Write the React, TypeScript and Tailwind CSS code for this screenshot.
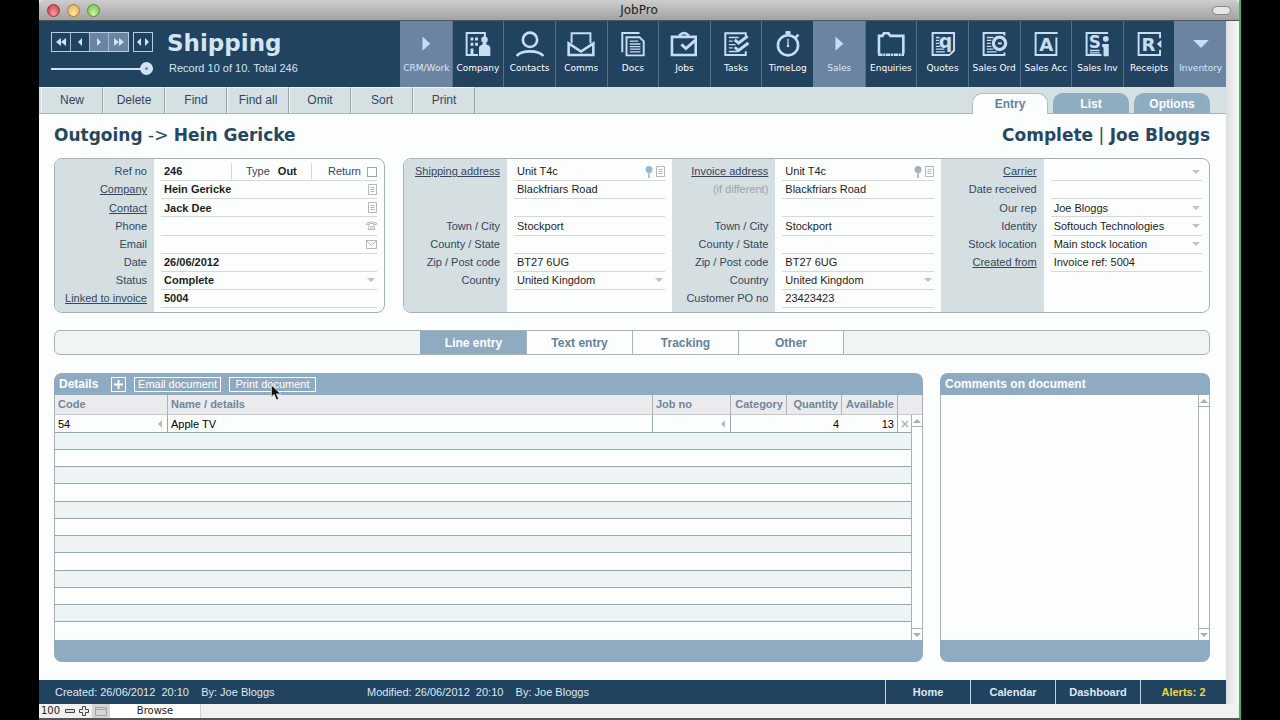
import { useId, type ReactNode } from 'react';
import clsx from 'clsx';

interface NavItem {
  label: string;
  icon: ReactNode;
  group?: boolean;
}

interface FieldData {
  label?: string;
  hint?: boolean;
  link?: boolean;
  value?: string;
  select?: boolean;
  icons?: ReactNode;
  blank?: boolean;
}

function NavIcon({ children }: { children: ReactNode }) {
  return (
    <svg
      viewBox="0 0 84 80"
      className="h-[26px] w-[28px]"
      fill="none"
      stroke="currentColor"
      strokeWidth="8"
      aria-hidden="true"
    >
      {children}
    </svg>
  );
}

const glyph = 'fill-current stroke-none font-[DejaVu_Sans,sans-serif] font-bold';

const arrowRight = (
  <NavIcon>
    <path d="M31 17L55 39L31 61Z" fill="currentColor" stroke="none" />
  </NavIcon>
);

const arrowDown = (
  <NavIcon>
    <path d="M18 28H66L42 52Z" fill="currentColor" stroke="none" />
  </NavIcon>
);

const navItems: NavItem[] = [
  { label: 'CRM/Work', icon: arrowRight, group: true },
  {
    label: 'Company',
    icon: (
      <NavIcon>
        <path d="M63 20V6H7V74H42" strokeWidth="6" />
        <path
          d="M19 20h9v9h-9zM33 20h9v9h-9zM19 36h9v9h-9zM33 36h9v9h-9zM19 54h9v18h-9z"
          fill="currentColor"
          stroke="none"
        />
        <circle cx="62" cy="27" r="10" fill="currentColor" stroke="none" />
        <path d="M45 77V52q0-8 10-10l2-6h10l2 6q11 2 11 12v23z" fill="currentColor" stroke="none" />
      </NavIcon>
    ),
  },
  {
    label: 'Contacts',
    icon: (
      <NavIcon>
        <circle cx="42" cy="27" r="22" />
        <path d="M1 77C16 58 68 58 83 77" />
      </NavIcon>
    ),
  },
  {
    label: 'Comms',
    icon: (
      <NavIcon>
        <path d="M13 38V7H71V38" strokeWidth="6" />
        <path d="M4 38V74H80V38L42 63Z" />
      </NavIcon>
    ),
  },
  {
    label: 'Docs',
    icon: (
      <NavIcon>
        <path d="M9 65V6H62" strokeWidth="6" />
        <path d="M22 75V19H62L75 32V75Z" strokeWidth="6" />
        <path d="M32 31H58M32 40H65M32 48H65M32 56H65M32 64H65" strokeWidth="4" />
      </NavIcon>
    ),
  },
  {
    label: 'Jobs',
    icon: (
      <NavIcon>
        <path d="M5 18H78V74H5Z" />
        <path d="M27 15Q42 -3 57 15" />
        <path d="M34 41L48 54L76 29" strokeWidth="9" />
      </NavIcon>
    ),
  },
  {
    label: 'Tasks',
    icon: (
      <NavIcon>
        <path d="M72 15V7H9V74H72V62" strokeWidth="6" />
        <path d="M20 20H50M20 31H32M20 42H40M20 52H32M20 63H48" strokeWidth="4" />
        <path d="M38 27L50 37L78 16M38 50L50 60L80 37" strokeWidth="9" />
      </NavIcon>
    ),
  },
  {
    label: 'TimeLog',
    icon: (
      <NavIcon>
        <circle cx="42" cy="44" r="31" />
        <path d="M42 0V13M34 5H50M64 22L74 11" />
        <path d="M42 24V48" strokeWidth="4" />
        <circle cx="42" cy="46" r="4" fill="currentColor" stroke="none" />
      </NavIcon>
    ),
  },
  { label: 'Sales', icon: arrowRight, group: true },
  {
    label: 'Enquiries',
    icon: (
      <NavIcon>
        <path d="M5 70V15H16L20 7H34L40 15H80V70" />
        <path d="M2 73H82" strokeDasharray="14 2 6 2" />
      </NavIcon>
    ),
  },
  {
    label: 'Quotes',
    icon: (
      <NavIcon>
        <path d="M64 74H10V6H76V60L64 72" strokeWidth="6" />
        <path d="M20 20H32M20 29H30M20 38H30M20 47H34M20 56H46M20 64H48" strokeWidth="4" />
        <text x="29" y="52" fontSize="58" className={glyph}>q</text>
      </NavIcon>
    ),
  },
  {
    label: 'Sales Ord',
    icon: (
      <NavIcon>
        <path d="M74 14V6H10V74H74V66" strokeWidth="6" />
        <path d="M20 20H40M20 29H34M20 38H32M20 47H34M20 56H40M20 64H50" strokeWidth="4" />
        <circle cx="59" cy="38" r="19" strokeWidth="10" />
        <path d="M54 38H66" strokeWidth="6" />
      </NavIcon>
    ),
  },
  {
    label: 'Sales Acc',
    icon: (
      <NavIcon>
        <path d="M78 6H10V74H74V20" strokeWidth="6" />
        <text x="21" y="60" fontSize="56" className={glyph}>A</text>
      </NavIcon>
    ),
  },
  {
    label: 'Sales Inv',
    icon: (
      <NavIcon>
        <path d="M76 6H10V74H56" strokeWidth="6" />
        <text x="17" y="53" fontSize="52" className={glyph}>S</text>
        <path d="M20 60H50M20 67H50" strokeWidth="4" />
        <circle cx="69" cy="24" r="9" fill="currentColor" stroke="none" />
        <path d="M58 40H78V78H62V50H58Z" fill="currentColor" stroke="none" />
      </NavIcon>
    ),
  },
  {
    label: 'Receipts',
    icon: (
      <NavIcon>
        <path d="M76 22V6H10V74H76V58" strokeWidth="6" />
        <text x="19" y="60" fontSize="56" className={glyph}>R</text>
        <path d="M80 28V52L66 40Z" fill="currentColor" stroke="none" />
      </NavIcon>
    ),
  },
  { label: 'Inventory', icon: arrowDown, group: true },
];

const actions = ['New', 'Delete', 'Find', 'Find all', 'Omit', 'Sort', 'Print'];
const views = ['Entry', 'List', 'Options'];
const sections = ['Line entry', 'Text entry', 'Tracking', 'Other'];
const places = ['Home', 'Calendar', 'Dashboard'];

const cardIcon = (
  <svg viewBox="0 0 9 11" className="h-[11px] w-[9px]" fill="none" stroke="#b3b9be" aria-hidden="true">
    <path d="M.5 .5H8.5V10.5H.5Z" />
    <path d="M2.5 3.5H6.5M2.5 5.5H6.5M2.5 7.5H6.5" />
  </svg>
);

const phoneIcon = (
  <svg viewBox="0 0 11 9" className="h-[9px] w-[11px]" fill="none" stroke="#b9bec2" aria-hidden="true">
    <path d="M.5 3.5V2Q5.5 -.5 10.5 2V3.5H8V2.5H3V3.5Z" />
    <path d="M3.5 3.5L2 8.5H9L7.5 3.5M4.5 5.5H7M4 7H7.5" />
  </svg>
);

const mailIcon = (
  <svg viewBox="0 0 11 9" className="h-[9px] w-[11px]" fill="none" stroke="#b3b9be" aria-hidden="true">
    <path d="M.5 .5H10.5V8.5H.5ZM.5 .5L5.5 5.5L10.5 .5" />
  </svg>
);

function Pin({ className }: { className: string }) {
  return (
    <svg viewBox="0 0 8 12" className={clsx('h-3 w-2', className)} fill="currentColor" aria-hidden="true">
      <circle cx="4" cy="3.5" r="3.5" />
      <path d="M3.2 6H4.8V12H3.2Z" />
    </svg>
  );
}

const orderFields: FieldData[] = [
  { label: 'Ref no', value: '246' },
  { label: 'Company', link: true, value: 'Hein Gericke', icons: cardIcon },
  { label: 'Contact', link: true, value: 'Jack Dee', icons: cardIcon },
  { label: 'Phone', icons: phoneIcon },
  { label: 'Email', icons: mailIcon },
  { label: 'Date', value: '26/06/2012' },
  { label: 'Status', value: 'Complete', select: true },
  { label: 'Linked to invoice', link: true, value: '5004' },
];

const shippingFields: FieldData[] = [
  {
    label: 'Shipping address',
    link: true,
    value: 'Unit T4c',
    icons: <><Pin className="text-[#9bb8d0]" />{cardIcon}</>,
  },
  { value: 'Blackfriars Road' },
  {},
  { label: 'Town / City', value: 'Stockport' },
  { label: 'County / State' },
  { label: 'Zip / Post code', value: 'BT27 6UG' },
  { label: 'Country', value: 'United Kingdom', select: true },
  { blank: true },
];

const invoiceFields: FieldData[] = [
  {
    label: 'Invoice address',
    link: true,
    value: 'Unit T4c',
    icons: <><Pin className="text-[#a5b0b8]" />{cardIcon}</>,
  },
  { label: '(if different)', hint: true, value: 'Blackfriars Road' },
  {},
  { label: 'Town / City', value: 'Stockport' },
  { label: 'County / State' },
  { label: 'Zip / Post code', value: 'BT27 6UG' },
  { label: 'Country', value: 'United Kingdom', select: true },
  { label: 'Customer PO no', value: '23423423' },
];

const deliveryFields: FieldData[] = [
  { label: 'Carrier', link: true, select: true },
  { label: 'Date received' },
  { label: 'Our rep', value: 'Joe Bloggs', select: true },
  { label: 'Identity', value: 'Softouch Technologies', select: true },
  { label: 'Stock location', value: 'Main stock location', select: true },
  { label: 'Created from', link: true, value: 'Invoice ref: 5004' },
  { blank: true },
  { blank: true },
];

function Triangle({ d, className }: { d: string; className?: string }) {
  return (
    <svg viewBox="0 0 8 8" className={clsx('size-2 shrink-0', className)} fill="currentColor" aria-hidden="true">
      <path d={d} />
    </svg>
  );
}

const DOWN = 'M0 2H8L4 6Z';
const UP = 'M0 6H8L4 2Z';
const LEFT = 'M6 0V8L2 4Z';

function FieldGroup({ fields, narrow, bold, first }: {
  fields: FieldData[];
  narrow?: boolean;
  bold?: boolean;
  first?: ReactNode;
}) {
  const base = useId();

  return (
    <div className="flex min-w-0">
      <div
        className={clsx(
          'grid shrink-0 grid-rows-8 bg-[#d5dfe2] py-1 pr-[7px] text-right text-[#34465e]',
          narrow ? 'w-[99px]' : 'w-[103px]',
        )}
      >
        {fields.map((field, i) => (
          <div key={i} className="flex items-center justify-end pb-px whitespace-nowrap">
            {field.link ? (
              <a href="#" id={`${base}l${i}`} className="underline">{field.label}</a>
            ) : field.label ? (
              <label htmlFor={`${base}f${i}`} className={clsx(field.hint && 'text-[#9aa3a8]')}>
                {field.label}
              </label>
            ) : null}
          </div>
        ))}
      </div>
      <div className={clsx('grid min-w-0 flex-1 grid-rows-8 px-[7px] py-1', bold && 'font-bold')}>
        {fields.map((field, i) => {
          const naming = field.link
            ? { 'aria-labelledby': `${base}l${i}` }
            : field.label
              ? {}
              : { 'aria-label': `Address line ${i + 1}` };

          return (
            <div
              key={i}
              className={clsx(
                'flex min-w-0 items-center border-b pl-[3px]',
                field.blank ? 'border-transparent' : 'border-[#d3d8da]',
              )}
            >
              {field.blank ? null : field.select ? (
                <>
                  <select
                    id={`${base}f${i}`}
                    defaultValue={field.value ?? ''}
                    className="min-w-0 flex-1 appearance-none bg-transparent outline-none"
                    {...naming}
                  >
                    <option>{field.value ?? ''}</option>
                  </select>
                  <Triangle d={DOWN} className="mr-[2px] text-[#bcc3c7]" />
                </>
              ) : (
                <input
                  id={`${base}f${i}`}
                  defaultValue={field.value}
                  className="w-full min-w-0 flex-1 bg-transparent outline-none"
                  {...naming}
                />
              )}
              {field.icons && <span className="flex items-center gap-[3px]">{field.icons}</span>}
              {i === 0 && first}
            </div>
          );
        })}
      </div>
    </div>
  );
}

function TypeAndReturn() {
  return (
    <div className="flex h-full font-normal text-[#34465e]">
      <div className="flex w-20 items-center gap-2 border-l border-[#d3d8da] pl-[14px]">
        <label htmlFor="type">Type</label>
        <input id="type" defaultValue="Out" className="w-7 bg-transparent font-bold text-[#222] outline-none" />
      </div>
      <label className="flex items-center gap-[6px] border-l border-[#d3d8da] pl-4">
        Return
        <input type="checkbox" className="size-[10px] appearance-none border border-[#9aa6ad] bg-white" />
      </label>
    </div>
  );
}

function ScrollBar() {
  return (
    <div className="flex h-full w-[11px] shrink-0 flex-col justify-between border-l border-[#a3b1b9] bg-white text-[#a3b1b9]">
      <button type="button" aria-label="Scroll up" className="flex h-3 items-center justify-center border-b border-[#a3b1b9]">
        <Triangle d={UP} />
      </button>
      <button type="button" aria-label="Scroll down" className="flex h-3 items-center justify-center border-t border-[#a3b1b9]">
        <Triangle d={DOWN} />
      </button>
    </div>
  );
}

function TitleBar() {
  return (
    <div className="flex h-[21px] items-center rounded-t border-b border-[#555] bg-linear-to-b from-[#cdcdcd] to-[#a3a3a3] px-2">
      <div className="flex flex-1 gap-[7px]">
        <button type="button" aria-label="Close" className="size-[13px] rounded-full border border-[#8d3a3e] bg-radial-[at_50%_80%] from-[#f4a0a0] to-[#c8323f]" />
        <button type="button" aria-label="Minimise" className="size-[13px] rounded-full border border-[#a5803f] bg-radial-[at_50%_80%] from-[#fdeaa5] to-[#e3a546]" />
        <button type="button" aria-label="Zoom" className="size-[13px] rounded-full border border-[#5d8b41] bg-radial-[at_50%_80%] from-[#cdf5a0] to-[#6fb74b]" />
      </div>
      <div className="font-[DejaVu_Sans,sans-serif] text-[12px] text-[#222]">JobPro</div>
      <div className="flex flex-1 justify-end">
        <button type="button" aria-label="Toggle toolbar" className="h-[9px] w-[19px] rounded-full border border-[#858585] bg-[#e6e6e6]" />
      </div>
    </div>
  );
}

function RecordNav() {
  const cell = 'flex w-[19px] items-center justify-center';

  return (
    <div className="flex w-[102px] flex-col pt-[11px]">
      <div className="flex h-5 justify-between text-[#cfe3f5]">
        <div className="flex divide-x divide-[#9fb9d0] border border-[#b5cde0]">
          <button type="button" aria-label="First record" className={cell}>
            <svg viewBox="0 0 12 8" className="h-2 w-3" fill="currentColor"><path d="M6 0V8L1 4ZM11 0V8L6 4Z" /></svg>
          </button>
          <button type="button" aria-label="Previous record" className={cell}>
            <Triangle d={LEFT} />
          </button>
          <button type="button" aria-label="Next record" className={clsx(cell, 'bg-[#6a84a2]')}>
            <Triangle d="M2 0V8L6 4Z" />
          </button>
          <button type="button" aria-label="Last record" className={clsx(cell, 'bg-[#6a84a2]')}>
            <svg viewBox="0 0 12 8" className="h-2 w-3" fill="currentColor"><path d="M1 0V8L6 4ZM6 0V8L11 4Z" /></svg>
          </button>
        </div>
        <button type="button" aria-label="Go to record" className="flex w-5 items-center justify-center border border-[#b5cde0]">
          <svg viewBox="0 0 14 8" className="h-2 w-[14px]" fill="currentColor"><path d="M5 0V8L1 4ZM9 0V8L13 4Z" /></svg>
        </button>
      </div>
      <input
        type="range"
        aria-label="Record"
        min="1"
        max="10"
        defaultValue="10"
        className="mt-[10px] h-[13px] w-full appearance-none bg-linear-to-r from-[#cfe3f5] to-[#cfe3f5] bg-[length:100%_2px] bg-center bg-no-repeat [&::-webkit-slider-thumb]:size-[13px] [&::-webkit-slider-thumb]:appearance-none [&::-webkit-slider-thumb]:rounded-full [&::-webkit-slider-thumb]:border-5 [&::-webkit-slider-thumb]:border-[#cfe3f5] [&::-webkit-slider-thumb]:bg-[#6a84a2]"
      />
    </div>
  );
}

function Header() {
  return (
    <header className="flex h-[66px] bg-[#22435f]">
      <div className="flex flex-1 gap-[14px] pl-3">
        <RecordNav />
        <div className="pt-2">
          <h1 className="font-[DejaVu_Sans,sans-serif] text-[23px] leading-7 font-bold text-[#d3e5f3]">Shipping</h1>
          <p className="pl-[2px] text-[11px] leading-[22px] text-[#d3e5f3]">Record 10 of 10. Total 246</p>
        </div>
      </div>
      <nav className="grid w-[826px] grid-cols-16">
        {navItems.map((item) => (
          <button
            key={item.label}
            type="button"
            className={clsx(
              'flex min-w-0 flex-col items-center gap-1 border-l pt-[10px] text-[#c5def4]',
              item.group ? 'border-[#6a84a2] bg-[#6a84a2]' : 'border-[#54718c]',
            )}
          >
            {item.icon}
            <span
              className={clsx(
                'font-[DejaVu_Sans,sans-serif] text-[9px] leading-[14px] whitespace-nowrap',
                item.group ? 'text-[#dbe8f4]' : 'text-white',
              )}
            >
              {item.label}
            </span>
          </button>
        ))}
      </nav>
    </header>
  );
}

function Toolbar() {
  return (
    <div className="flex h-[27px] items-end justify-between border-b border-[#a9b3b6] bg-[#d5e0e2] pr-4 pl-[2px]">
      <div className="flex self-stretch">
        {actions.map((action) => (
          <button
            key={action}
            type="button"
            className="w-[62px] border-t border-r border-l border-t-[#eef4f5] border-r-[#98a3a7] border-l-[#eef4f5] pb-px text-[12px] text-[#34465e]"
          >
            {action}
          </button>
        ))}
      </div>
      <div className="-mb-px flex gap-[5px] font-bold">
        {views.map((view, i) => (
          <button
            key={view}
            type="button"
            className={clsx(
              'w-[76px] rounded-t-[10px] border-t text-[12px]',
              i === 0
                ? 'h-[21px] border-r border-l border-[#b4bec2] bg-[#fcfdfd] text-[#64829c]'
                : 'mb-px h-5 border-[#8fadc1] bg-[#8fadc1] text-white',
            )}
          >
            {view}
          </button>
        ))}
      </div>
    </div>
  );
}

function SectionTabs() {
  return (
    <div className="mt-[17px] flex h-[25px] justify-center overflow-hidden rounded-md border border-[#a9b4ba] bg-[#f0f4f4]">
      {sections.map((section, i) => (
        <button
          key={section}
          type="button"
          className={clsx(
            'w-[106px] border-l text-[12px] font-bold last:border-r',
            i === 0
              ? 'border-[#8fabc1] bg-[#8fabc1] text-white'
              : 'border-[#a9b4ba] bg-[#fcfdfd] text-[#64829c]',
          )}
        >
          {section}
        </button>
      ))}
    </div>
  );
}

function DetailsPanel() {
  const head = 'border-r border-[#a9b4ba] px-[3px] font-bold';
  const outlined = 'h-[15px] border border-white leading-[13px]';

  return (
    <section className="overflow-hidden rounded-lg bg-[#8fabc1]">
      <div className="flex h-[22px] items-center pl-[5px] text-white">
        <h2 className="w-[52px] text-[12px] font-bold">Details</h2>
        <button type="button" aria-label="Add line" className={clsx(outlined, 'flex w-[15px] items-center justify-center')}>
          <svg viewBox="0 0 9 9" className="size-[9px]" stroke="currentColor" strokeWidth="2"><path d="M4.5 0V9M0 4.5H9" /></svg>
        </button>
        <button type="button" className={clsx(outlined, 'ml-2 w-[87px]')}>Email document</button>
        <button type="button" className={clsx(outlined, 'relative ml-2 w-[87px]')}>
          Print document
          <svg viewBox="0 0 12 18" className="absolute top-[6px] left-10 h-[17px] w-3" aria-hidden="true">
            <path d="M1 1V14L4 11L6.5 17L9 16L6.5 10.5H11Z" fill="#111" stroke="#fff" strokeWidth=".8" />
          </svg>
        </button>
      </div>
      <table className="h-[245px] w-full table-fixed border-separate border-spacing-0 border-x border-[#a3b1b9] bg-[#fcfdfd]">
        <colgroup>
          <col className="w-[113px]" />
          <col />
          <col className="w-[78px]" />
          <col className="w-14" />
          <col className="w-[55px]" />
          <col className="w-14" />
          <col className="w-[13px]" />
          <col className="w-[11px]" />
        </colgroup>
        <thead>
          <tr className="h-5 bg-[#ebebed] text-left text-[#6f869c] [&>th]:border-b [&>th]:border-b-[#c3c9cc]">
            <th className={head}>Code</th>
            <th className={head}>Name / details</th>
            <th className={head}>Job no</th>
            <th className={clsx(head, 'text-right')}>Category</th>
            <th className={clsx(head, 'text-right')}>Quantity</th>
            <th className={clsx(head, 'text-right')}>Available</th>
            <th colSpan={2} />
          </tr>
        </thead>
        <tbody className="leading-4 text-black">
          <tr className="h-[18px] [&>td]:border-b [&>td]:border-[#93a9b8]">
            <td className="border-r px-[3px]">
              <div className="flex items-center justify-between">54<Triangle d={LEFT} className="text-[#b5bdc2]" /></div>
            </td>
            <td className="border-r px-[3px]">Apple TV</td>
            <td className="border-r px-[3px]">
              <div className="flex justify-end"><Triangle d={LEFT} className="text-[#b5bdc2]" /></div>
            </td>
            <td />
            <td className="px-[3px] text-right">4</td>
            <td className="border-r px-[3px] text-right">13</td>
            <td>
              <button type="button" aria-label="Remove line" className="flex w-full justify-center text-[#a9b2b7]">
                <svg viewBox="0 0 8 8" className="size-2" stroke="currentColor" strokeWidth="1.5"><path d="M1 1L7 7M7 1L1 7" /></svg>
              </button>
            </td>
            <td rowSpan={13} className="border-b-0! p-0">
              <div className="h-[225px]"><ScrollBar /></div>
            </td>
          </tr>
          {Array.from({ length: 12 }, (_, i) => (
            <tr key={i} className={clsx('even:bg-[#eef4f4]', i % 4 === 3 ? 'h-[18px]' : 'h-[17px]')}>
              <td colSpan={7} className={clsx(i < 11 && 'border-b border-[#93a9b8]')} />
            </tr>
          ))}
        </tbody>
      </table>
      <div className="h-[22px]" />
    </section>
  );
}

function CommentsPanel() {
  return (
    <section className="flex flex-col overflow-hidden rounded-lg bg-[#8fabc1]">
      <h2 className="h-[22px] pl-[5px] text-[12px] leading-[22px] font-bold text-white">
        <label htmlFor="comments">Comments on document</label>
      </h2>
      <div className="flex flex-1 border-x border-[#a3b1b9] bg-[#fcfdfd]">
        <textarea id="comments" className="flex-1 resize-none p-1 outline-none" />
        <ScrollBar />
      </div>
      <div className="h-[22px]" />
    </section>
  );
}

function Footer() {
  return (
    <footer className="flex h-6 items-center bg-[#22435f] text-[#dce8f2]">
      <p className="w-[312px] pl-4 whitespace-pre">Created: 26/06/2012  20:10    By: Joe Bloggs</p>
      <p className="flex-1 pl-4 whitespace-pre">Modified: 26/06/2012  20:10    By: Joe Bloggs</p>
      <nav className="flex self-stretch font-bold">
        {places.map((place) => (
          <button key={place} type="button" className="w-[85px] border-l border-[#c5d3df]">{place}</button>
        ))}
        <button type="button" className="w-[86px] border-l border-[#c5d3df] text-[#e6dc3c]">Alerts: 2</button>
      </nav>
    </footer>
  );
}

function StatusStrip() {
  return (
    <div className="flex h-[14px] items-center bg-[#f1f1f2] font-[DejaVu_Sans,sans-serif] text-[10px] leading-[14px] text-[#222]">
      <span className="w-[25px] pl-[2px]">100</span>
      <button type="button" aria-label="Zoom out" className="flex w-3 justify-center">
        <svg viewBox="0 0 10 4" className="h-1 w-[10px]" fill="#ddd" stroke="#444"><path d="M.5 .5H9.5V3.5H.5Z" /></svg>
      </button>
      <button type="button" aria-label="Zoom in" className="flex w-4 justify-center">
        <svg viewBox="0 0 10 10" className="size-[10px]" fill="#eee" stroke="#444">
          <path d="M3.5 .5H6.5V3.5H9.5V6.5H6.5V9.5H3.5V6.5H.5V3.5H3.5Z" />
        </svg>
      </button>
      <button type="button" aria-label="Status toolbar" className="flex h-full w-[18px] items-center justify-center bg-[#d6d6d6]">
        <svg viewBox="0 0 12 9" className="h-[9px] w-3" fill="none" stroke="#a5a5a5"><path d="M.5 .5H11.5V8.5H.5ZM.5 2.5H11.5" /></svg>
      </button>
      <button type="button" className="h-full w-[91px] border-r border-[#d0d0d0] bg-white text-center">Browse</button>
    </div>
  );
}

export default function App() {
  return (
    <div className="min-h-screen bg-black px-[39px] font-[Liberation_Sans,Arial,sans-serif] text-[11px] text-[#1d1d1d]">
      <div className="flex min-h-screen flex-col border-r-2 border-b-2 border-r-[#3fb557] border-b-[#555] bg-[#fcfdfd]">
        <TitleBar />
        <div className="flex flex-1">
          <div className="flex min-w-0 flex-1 flex-col">
            <Header />
            <Toolbar />
            <main className="flex-1 pr-4 pb-[18px] pl-[15px]">
              <div className="flex h-11 items-center justify-between font-[DejaVu_Sans,sans-serif] text-[17px] text-[#27475f]">
                <h2><b>Outgoing</b> -&gt; <b>Hein Gericke</b></h2>
                <p><b>Complete</b> | <b>Joe Bloggs</b></p>
              </div>
              <div className="grid grid-cols-[331fr_807fr] gap-[18px]">
                <div className="grid h-[155px] overflow-hidden rounded-lg border border-[#a3b1b9]">
                  <FieldGroup fields={orderFields} narrow bold first={<TypeAndReturn />} />
                </div>
                <div className="grid h-[155px] grid-cols-3 overflow-hidden rounded-lg border border-[#a3b1b9]">
                  <FieldGroup fields={shippingFields} />
                  <FieldGroup fields={invoiceFields} />
                  <FieldGroup fields={deliveryFields} />
                </div>
              </div>
              <SectionTabs />
              <div className="mt-[18px] grid grid-cols-[869fr_270fr] gap-[17px]">
                <DetailsPanel />
                <CommentsPanel />
              </div>
            </main>
            <Footer />
          </div>
          <div className="w-[13px] bg-linear-to-r from-[#dedde1] to-[#fafafa]" />
        </div>
        <StatusStrip />
      </div>
    </div>
  );
}
